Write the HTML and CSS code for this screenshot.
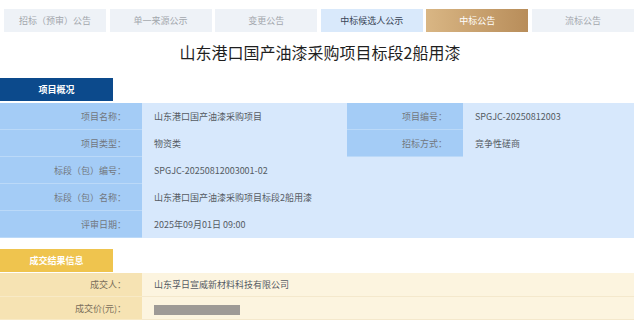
FILE: index.html
```html
<!DOCTYPE html>
<html lang="zh-CN">
<head>
  <meta charset="UTF-8">
  <title>山东港口国产油漆采购项目标段2船用漆</title>
  <link rel="stylesheet" href="styles.css">
</head>
<body>
  <div class="tabs">
    <div class="tab">招标（预审）公告</div>
    <div class="tab">单一来源公示</div>
    <div class="tab">变更公告</div>
    <div class="tab tab-blue">中标候选人公示</div>
    <div class="tab tab-gold">中标公告</div>
    <div class="tab">流标公告</div>
  </div>

  <h1 class="title">山东港口国产油漆采购项目标段2船用漆</h1>

  <div class="section-head head-blue">项目概况</div>
  <div class="info info-blue">
    <div class="lbl">项目名称：</div>
    <div class="val">山东港口国产油漆采购项目</div>
    <div class="lbl">项目编号：</div>
    <div class="val">SPGJC-20250812003</div>

    <div class="lbl">项目类型：</div>
    <div class="val">物资类</div>
    <div class="lbl">招标方式：</div>
    <div class="val">竞争性磋商</div>

    <div class="lbl">标段（包）编号：</div>
    <div class="val wide">SPGJC-20250812003001-02</div>

    <div class="lbl">标段（包）名称：</div>
    <div class="val wide">山东港口国产油漆采购项目标段2船用漆</div>

    <div class="lbl">评审日期：</div>
    <div class="val wide">2025年09月01日 09:00</div>
  </div>

  <div class="section-head head-gold">成交结果信息</div>
  <div class="info info-gold">
    <div class="lbl">成交人：</div>
    <div class="val">山东孚日宣威新材料科技有限公司</div>
    <div class="lbl">成交价(元)：</div>
    <div class="val"><span class="redacted"></span></div>
  </div>
</body>
</html>
```

FILE: styles.css
```css
* { box-sizing: border-box; margin: 0; padding: 0 }
body {
  background: #fff;
  color: #555;
  font-family: "Noto Sans CJK SC", "Noto Sans", sans-serif;
  font-size: 9px;
  width: 640px;
}
.tabs {
  display: flex;
  gap: 3.6px;
  padding: 9px 6px 0 4px;
}
.tab {
  flex: 1;
  height: 23px;
  line-height: 23px;
  text-align: center;
  background: #eef2f7;
  color: #a3a7ad;
}
.tab-blue { background: #d9e9fb; color: #3a4556 }
.tab-gold {
  background: linear-gradient(90deg, #d9b684, #b88d5a);
  color: #fff;
}
.title {
  height: 34px;
  margin-top: 3px;
  line-height: 34px;
  text-align: center;
  font-size: 16px;
  font-weight: 400;
  color: #1f1f1f;
}
.section-head {
  width: 113px;
  height: 23px;
  margin-top: 9px;
  line-height: 23px;
  text-align: center;
  color: #fff;
  font-weight: 700;
}
.head-blue { background: #0c4a8c }
.head-gold { background: #efc44e; margin-top: 11px }
.info {
  display: grid;
  width: 634px;
  margin-top: 2px;
}
.info-blue {
  grid-template-columns: 142px 205px 116px 171px;
  grid-auto-rows: 27px;
  background: #d7e8fc;
}
.info-gold {
  grid-template-columns: 142px 492px;
  grid-template-rows: 24px 23px;
  margin-top: 1px;
  background: #fcf4df;
}
.lbl {
  text-align: right;
  padding-right: 16px;
  line-height: 27px;
  color: #72777e;
  border-bottom: 1px solid rgba(255,255,255,0.25);
}
.val {
  padding-left: 12px;
  line-height: 27px;
  color: #555b63;
}
.wide { grid-column: span 3 }
.info-blue .lbl { background: #a4ccf6 }
.info-gold .lbl {
  background: #f6e3b3;
  line-height: 23px;
  color: #7a6e5a;
}
.info-gold .val {
  line-height: 23px;
  border-bottom: 1px solid rgba(230,210,170,0.35);
}
.redacted {
  display: inline-block;
  width: 86px;
  height: 10px;
  vertical-align: middle;
  background: #9e9a96;
}
```
